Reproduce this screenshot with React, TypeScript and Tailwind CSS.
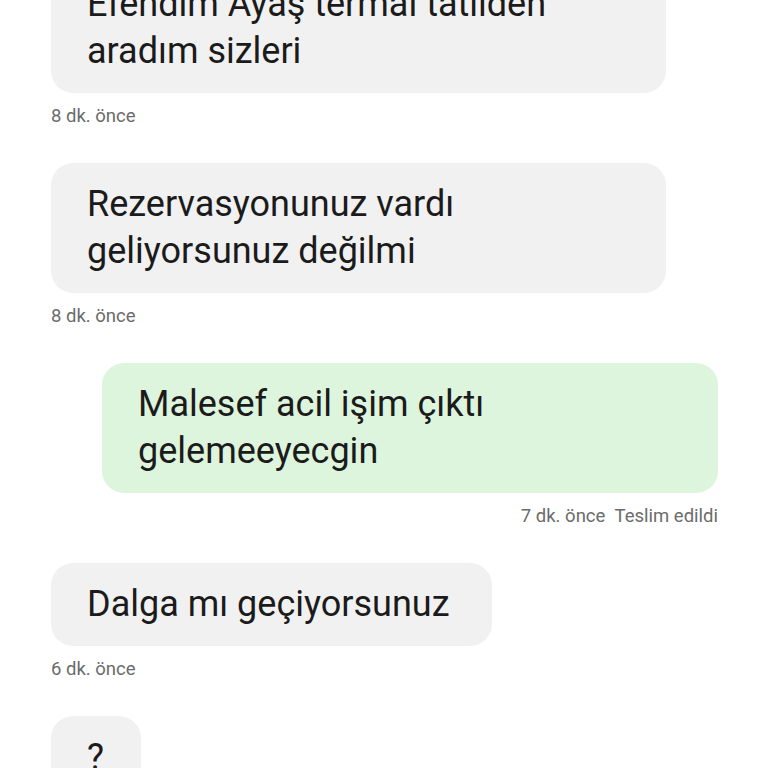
import React from "react";

type Msg = { text: string[]; time: string; out?: boolean; w?: string };

const messages: Msg[] = [
  { text: ["Efendim Ayaş termal tatilden", "aradım sizleri"], time: "8 dk. önce", w: "w-[615px]" },
  { text: ["Rezervasyonunuz vardı", "geliyorsunuz değilmi"], time: "8 dk. önce", w: "w-[615px]" },
  { text: ["Malesef acil işim çıktı", "gelemeeyecgin"], time: "7 dk. önce\u00a0\u00a0Teslim edildi", out: true, w: "w-[616px]" },
  { text: ["Dalga mı geçiyorsunuz"], time: "6 dk. önce" },
  { text: ["?"], time: "", w: "w-[90px]" },
];

export default function App() {
  return (
    <div
      className="w-[768px] h-[768px] overflow-hidden bg-white"
      style={{ fontFamily: "Roboto, 'Noto Sans', sans-serif" }}
    >
      <div className="flex flex-col pl-[51px] pr-[50px] -mt-[37px]">
        {messages.map((m, i) => (
          <div key={i} className={`flex flex-col mb-[35px] ${m.out ? "items-end" : "items-start"}`}>
            <div
              className={`rounded-[22px] py-[18px] pl-[36px] pr-[42px] text-[36px] leading-[47px] text-[#1b1b1b] ${
                m.out ? "bg-[#ddf4dd]" : "bg-[#f1f1f1]"
              } ${m.w ?? ""}`}
            >
              {m.text.map((t, j) => (
                <div key={j} className="whitespace-nowrap">{t}</div>
              ))}
            </div>
            {m.time && (
              <div className="mt-[11px] text-[18.5px] leading-[24px] text-[#6b6b6b] whitespace-pre">
                {m.time}
              </div>
            )}
          </div>
        ))}
      </div>
    </div>
  );
}
